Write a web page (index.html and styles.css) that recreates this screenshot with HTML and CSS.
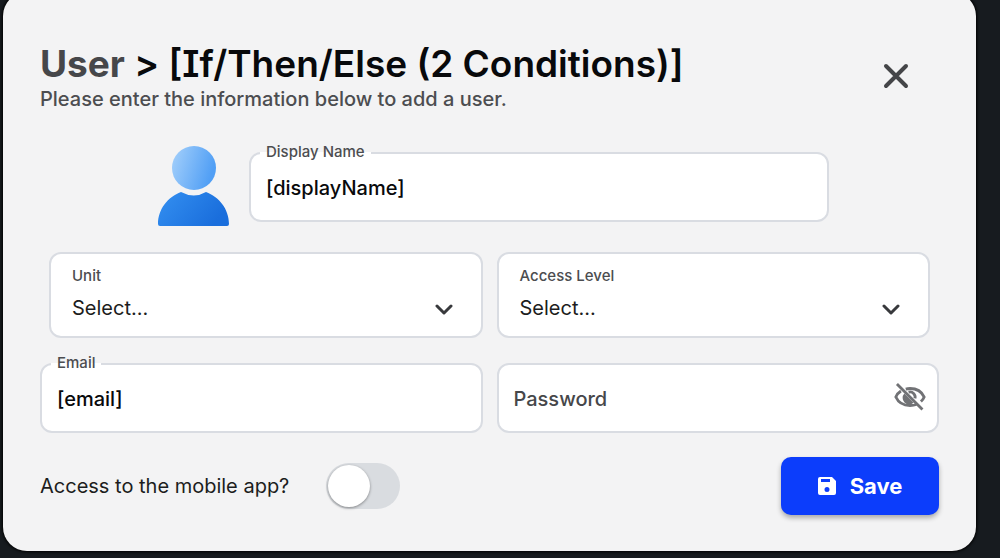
FILE: index.html
```html
<!DOCTYPE html>
<html lang="en">
<head>
  <meta charset="UTF-8" />
  <meta name="viewport" content="width=device-width, initial-scale=1.0"/>
  <title>Add User</title>
  <link rel="stylesheet" href="styles.css">
</head>
<body>
  <form class="modal">
    <header class="modal-header">
      <div>
        <h1><span class="crumb">User</span> &gt; [If/Then/Else (2 Conditions)]</h1>
        <p>Please enter the information below to add a user.</p>
      </div>
      <button type="button" class="icon-btn close" aria-label="Close">
        <svg width="26" height="26" viewBox="0 0 26 26" fill="none" stroke="#444548" stroke-width="4" stroke-linecap="round">
          <path d="M3 3l20 20M23 3L3 23"/>
        </svg>
      </button>
    </header>

    <!-- Avatar + display name -->
    <div class="profile-row">
      <svg class="avatar" width="71" height="80" viewBox="0 0 71 80">
        <defs>
          <linearGradient id="head" x1="0" y1="0" x2="1" y2="0.3">
            <stop offset="0" stop-color="#a6d1fb"/>
            <stop offset="1" stop-color="#519ff5"/>
          </linearGradient>
          <linearGradient id="torso" x1="0" y1="0" x2="1" y2="0.4">
            <stop offset="0" stop-color="#3490f1"/>
            <stop offset="1" stop-color="#1a6edc"/>
          </linearGradient>
        </defs>
        <circle cx="36" cy="22" r="22" fill="url(#head)"/>
        <path d="M23 46Q36 53 48 46C61 51 71 63 71 78Q71 80 69 80H2Q0 80 0 78C0 63 10 51 23 46Z" fill="url(#torso)"/>
      </svg>
      <div class="field">
        <label for="displayName">Display Name</label>
        <input type="text" id="displayName" value="[displayName]">
      </div>
    </div>

    <!-- Dropdowns -->
    <div class="grid selects">
      <div class="select-box">
        <label for="unit">Unit</label>
        <select id="unit"><option>Select...</option></select>
        <svg class="chevron" width="18" height="12" viewBox="0 0 18 12" fill="none" stroke="#38393c" stroke-width="3" stroke-linecap="round" stroke-linejoin="round">
          <path d="M2 2l7 7 7-7"/>
        </svg>
      </div>
      <div class="select-box">
        <label for="access">Access Level</label>
        <select id="access"><option>Select...</option></select>
        <svg class="chevron" width="18" height="12" viewBox="0 0 18 12" fill="none" stroke="#38393c" stroke-width="3" stroke-linecap="round" stroke-linejoin="round">
          <path d="M2 2l7 7 7-7"/>
        </svg>
      </div>
    </div>

    <!-- Login details -->
    <div class="grid">
      <div class="field">
        <label for="email">Email</label>
        <input type="text" id="email" value="[email]">
      </div>
      <div class="field">
        <input type="password" id="password" placeholder="Password" aria-label="Password">
        <button type="button" class="icon-btn eye" aria-label="Show password">
          <svg width="34" height="34" viewBox="0 0 24 24" fill="none" stroke="#717275" stroke-width="2">
            <path d="M9 6.4C10 6.1 11 6 12 6c5 0 8.500 2.700 10 6-.5 1.200-1.300 2.300-2.300 3.200M16.500 17.300C15.200 17.800 13.700 18 12 18c-5 0-8.500-2.700-10-6 .7-1.600 1.900-3.100 3.600-4.200"/>
            <path d="M8 9.500A4.600 4.600 0 0 0 14.500 16Z" fill="#717275" stroke="none"/>
            <path d="M11 8.600a3.600 3.600 0 0 1 4.500 4.400"/>
            <path d="M2.800 2.800L20.800 20.800"/>
          </svg>
        </button>
      </div>
    </div>

    <footer class="modal-footer">
      <label for="mobile">Access to the mobile app?</label>
      <input type="checkbox" id="mobile" class="toggle" role="switch">
      <button type="submit" class="save">
        <svg width="18" height="18" viewBox="0 0 18 18">
          <path fill="#fff" fill-rule="evenodd" d="M2 0H14L18 4V16Q18 18 16 18H2Q0 18 0 16V2Q0 0 2 0ZM3 2V5H12V2ZM9 10a2.500 2.500 0 1 0 0 5a2.500 2.500 0 0 0 0-5Z"/>
        </svg>
        Save
      </button>
    </footer>
  </form>
</body>
</html>
```
FILE: styles.css
```css
* {
  box-sizing: border-box;
  margin: 0;
  padding: 0;
}

body {
  background: #171b1f;
  font-family: Inter, sans-serif;
  font-size: 20px;
  color: #1c1d20;
  overflow: hidden;
}

/* top of the dialog runs off the window */
.modal {
  margin: -8px 24px 8px 3px;
  padding: 50px 37px 36px;
  background: #f3f3f4;
  border-radius: 24px;
  box-shadow: 0 0 3px 1px #000;
}

.modal-header {
  display: flex;
  justify-content: space-between;
  padding-right: 23px;
}

h1 {
  font-size: 37px;
  line-height: 44px;
  font-weight: 600;
  color: #08090b;
  font-feature-settings: "cv08";
  white-space: nowrap;
}

.crumb {
  color: #46474a;
  font-weight: 700;
}

.modal-header p {
  line-height: 26px;
  font-weight: 500;
  color: #4c4d50;
}

.icon-btn {
  display: flex;
  align-items: center;
  justify-content: center;
  border: none;
  background: none;
  cursor: pointer;
}

.close {
  width: 40px;
  height: 68px;
}

.profile-row {
  display: flex;
  align-items: flex-end;
  gap: 20px;
  padding: 34px 110px 0 118px;
}

.avatar {
  flex: none;
}

.field {
  position: relative;
  flex: 1;
}

.profile-row .field {
  margin-bottom: 4px;
}

.field input {
  display: block;
  width: 100%;
  height: 70px;
  padding: 2px 15px 0;
  border: 2px solid #d9dce2;
  border-radius: 12px;
  background: #fff;
  font: 500 20px Inter, sans-serif;
  color: #08090b;
}

.field input::placeholder {
  color: #46474a;
  opacity: 1;
}

/* label sits on the border of the input */
.field label {
  position: absolute;
  top: -10px;
  left: 11px;
  padding: 0 6px;
  font-size: 15px;
  line-height: 20px;
  font-weight: 500;
  color: #4c4d50;
  background: linear-gradient(#f3f3f4 50%, #fff 50%);
}

.grid {
  display: grid;
  grid-template-columns: 1fr 1fr;
  gap: 14px;
}

.selects {
  margin: 26px 9px 25px;
}

.select-box {
  position: relative;
  height: 86px;
  padding: 12px 21px;
  border: 2px solid #d9dce2;
  border-radius: 12px;
  background: #fff;
}

.select-box label {
  display: block;
  font-size: 15px;
  line-height: 20px;
  font-weight: 500;
  color: #4c4d50;
}

.select-box select {
  display: block;
  width: 100%;
  height: 44px;
  border: none;
  appearance: none;
  background: none;
  font: 400 20px Inter, sans-serif;
  color: #1c1d20;
}

.chevron {
  position: absolute;
  right: 28px;
  bottom: 20px;
  pointer-events: none;
}

.eye {
  position: absolute;
  top: 17px;
  right: 12px;
}

.modal-footer {
  display: flex;
  align-items: center;
  margin-top: 24px;
}

.toggle {
  appearance: none;
  width: 74px;
  height: 46px;
  margin-left: 37px;
  padding: 2px;
  border-radius: 23px;
  background: #d9dce0;
  cursor: pointer;
}

.toggle::before {
  content: "";
  display: block;
  width: 42px;
  height: 42px;
  border-radius: 50%;
  background: #fff;
  box-shadow: 0 1px 3px rgba(0, 0, 0, 0.4);
}

.toggle:checked::before {
  margin-left: auto;
}

.save {
  display: flex;
  align-items: center;
  justify-content: center;
  gap: 14px;
  width: 158px;
  height: 58px;
  margin-left: auto;
  border: none;
  border-radius: 10px;
  background: #0c3dfb;
  box-shadow: 0 3px 5px rgba(0, 0, 0, 0.3);
  font: 700 22px Inter, sans-serif;
  color: #fff;
  cursor: pointer;
}
```
